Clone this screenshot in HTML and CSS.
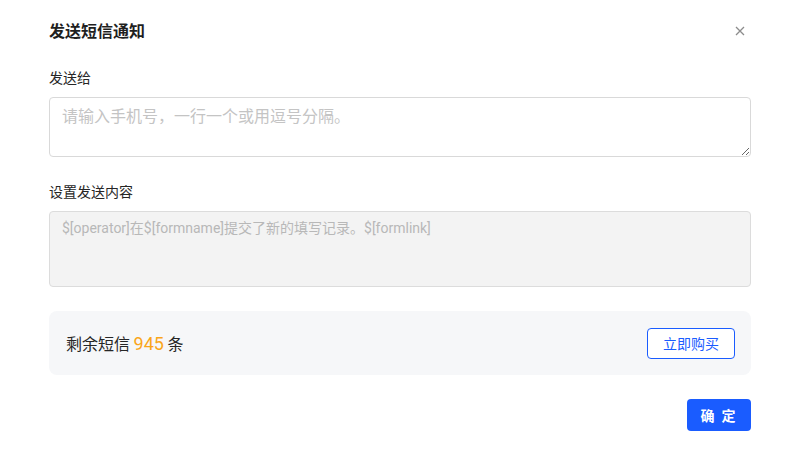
FILE: index.html
```html
<!DOCTYPE html>
<html lang="zh">
<head>
<meta charset="utf-8">
<link rel="stylesheet" href="styles.css">
</head>
<body>
<div class="dialog">
  <div class="header">
    <h1 class="title">发送短信通知</h1>
    <span class="close">
      <svg width="10" height="10" viewBox="0 0 10 10"><path d="M1 1L9 9M9 1L1 9" stroke="#8c8c8c" stroke-width="1.3" fill="none"/></svg>
    </span>
  </div>
  <div class="field">
    <div class="label">发送给</div>
    <textarea class="input" placeholder="请输入手机号，一行一个或用逗号分隔。"></textarea>
  </div>
  <div class="field">
    <div class="label">设置发送内容</div>
    <div class="content">$[operator]在$[formname]提交了新的填写记录。$[formlink]</div>
  </div>
  <div class="quota">
    <div class="quota-text">剩余短信 <span class="num">945</span> 条</div>
    <button class="buy">立即购买</button>
  </div>
  <div class="footer">
    <button class="ok">确 定</button>
  </div>
</div>
</body>
</html>
```
FILE: styles.css
```css
* { box-sizing: border-box; }
html, body { margin: 0; padding: 0; background: #fff; }
body {
  font-family: "Noto Sans CJK SC", "Noto Sans", sans-serif;
  color: #262626;
  width: 800px;
  height: 450px;
  overflow: hidden;
}
.dialog {
  padding: 17px 49px 0 49px;
  display: flex;
  flex-direction: column;
}
.header {
  display: flex;
  align-items: center;
  justify-content: space-between;
  height: 26px;
}
.title {
  margin: 0;
  font-size: 16px;
  font-weight: 700;
  color: #1f1f1f;
  line-height: 26px;
}
.close {
  display: flex;
  width: 10px;
  height: 10px;
  margin-right: 6px;
  margin-top: 2px;
}
.field { display: flex; flex-direction: column; }
.label {
  font-size: 14px;
  line-height: 20px;
  color: #262626;
  margin-top: 24px;
  margin-bottom: 10px;
}
.field:nth-of-type(2) .label { margin-top: 24px; }
.field:nth-of-type(3) .label { margin-top: 24px; }
.input {
  display: block;
  width: 702px;
  height: 60px;
  border: 1px solid #d9d9d9;
  border-radius: 4px;
  padding: 6px 12px;
  font-family: "Noto Sans CJK SC", sans-serif;
  font-size: 16px;
  line-height: 22px;
  color: #262626;
  resize: vertical;
  outline: none;
  margin: 0;
}
.input::placeholder { color: #c4c4c4; }
.content {
  width: 702px;
  height: 76px;
  background: #f3f3f3;
  border: 1px solid #dcdcdc;
  border-radius: 4px;
  padding: 6px 12px;
  font-family: Roboto, "Noto Sans CJK SC", sans-serif;
  font-size: 14px;
  line-height: 20px;
  color: #b8b8b8;
}
.quota {
  margin-top: 24px;
  width: 702px;
  height: 64px;
  background: #f6f7f9;
  border-radius: 8px;
  display: flex;
  align-items: center;
  justify-content: space-between;
  padding: 0 16px 0 17px;
}
.quota-text {
  font-size: 16px;
  color: #262626;
}
.num {
  color: #faa519;
  font-size: 18px;
  font-family: Roboto, sans-serif;
}
.buy {
  width: 88px;
  height: 31px;
  border: 1px solid #1a5cff;
  border-radius: 4px;
  background: #fff;
  color: #1a5cff;
  font-family: "Noto Sans CJK SC", sans-serif;
  font-size: 14px;
  padding: 0;
  cursor: pointer;
}
.footer {
  display: flex;
  justify-content: flex-end;
  margin-top: 24px;
}
.ok {
  width: 64px;
  height: 32px;
  border: none;
  border-radius: 4px;
  background: #1a5cff;
  color: #fff;
  font-family: "Noto Sans CJK SC", sans-serif;
  font-size: 14px;
  font-weight: 700;
  letter-spacing: 2px;
  padding: 0;
}
```
